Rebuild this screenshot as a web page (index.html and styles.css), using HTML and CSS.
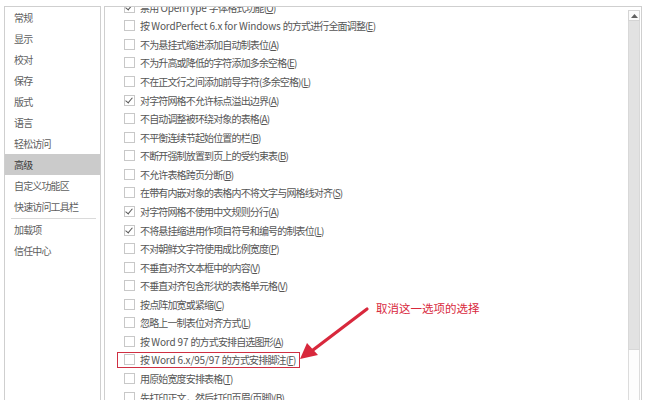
FILE: index.html
```html
<!DOCTYPE html>
<html lang="zh-CN">
<head>
<meta charset="utf-8">
<link rel="stylesheet" href="styles.css">
</head>
<body>
<div class="dialog">
  <nav class="sidebar">
    <div class="nav-item">常规</div>
    <div class="nav-item">显示</div>
    <div class="nav-item">校对</div>
    <div class="nav-item">保存</div>
    <div class="nav-item">版式</div>
    <div class="nav-item">语言</div>
    <div class="nav-item">轻松访问</div>
    <div class="nav-item selected">高级</div>
    <div class="nav-item">自定义功能区</div>
    <div class="nav-item">快速访问工具栏</div>
    <div class="nav-sep"></div>
    <div class="nav-item">加载项</div>
    <div class="nav-item">信任中心</div>
  </nav>
  <section class="content">
    <div class="list">
      <div class="row"><span class="cb checked"></span><span>禁用<span class="lat"> OpenType </span>字体格式功能(<u>O</u>)</span></div>
      <div class="row"><span class="cb"></span><span>按<span class="lat"> WordPerfect 6.x for Windows </span>的方式进行全面调整(<u>E</u>)</span></div>
      <div class="row"><span class="cb"></span><span>不为悬挂式缩进添加自动制表位(<u>A</u>)</span></div>
      <div class="row"><span class="cb"></span><span>不为升高或降低的字符添加多余空格(<u>E</u>)</span></div>
      <div class="row"><span class="cb"></span><span>不在正文行之间添加前导字符(多余空格)(<u>L</u>)</span></div>
      <div class="row"><span class="cb checked"></span><span>对字符网格不允许标点溢出边界(<u>A</u>)</span></div>
      <div class="row"><span class="cb"></span><span>不自动调整被环绕对象的表格(<u>A</u>)</span></div>
      <div class="row"><span class="cb"></span><span>不平衡连续节起始位置的栏(<u>B</u>)</span></div>
      <div class="row"><span class="cb"></span><span>不断开强制放置到页上的受约束表(<u>B</u>)</span></div>
      <div class="row"><span class="cb"></span><span>不允许表格跨页分断(<u>B</u>)</span></div>
      <div class="row"><span class="cb"></span><span>在带有内嵌对象的表格内不将文字与网格线对齐(<u>S</u>)</span></div>
      <div class="row"><span class="cb checked"></span><span>对字符网格不使用中文规则分行(<u>A</u>)</span></div>
      <div class="row"><span class="cb checked"></span><span>不将悬挂缩进用作项目符号和编号的制表位(<u>L</u>)</span></div>
      <div class="row"><span class="cb"></span><span>不对朝鲜文字符使用成比例宽度(<u>P</u>)</span></div>
      <div class="row"><span class="cb"></span><span>不垂直对齐文本框中的内容(<u>V</u>)</span></div>
      <div class="row"><span class="cb"></span><span>不垂直对齐包含形状的表格单元格(<u>V</u>)</span></div>
      <div class="row"><span class="cb"></span><span>按点阵加宽或紧缩(<u>C</u>)</span></div>
      <div class="row"><span class="cb"></span><span>忽略上一制表位对齐方式(<u>L</u>)</span></div>
      <div class="row"><span class="cb"></span><span>按<span class="lat"> Word 97 </span>的方式安排自选图形(<u>A</u>)</span></div>
      <div class="row"><span class="hl"><span class="cb"></span><span>按<span class="lat"> Word 6.x/95/97 </span>的方式安排脚注(<u>F</u>)</span></span></div>
      <div class="row"><span class="cb"></span><span>用原始宽度安排表格(<u>T</u>)</span></div>
      <div class="row"><span class="cb"></span><span>先打印正文，然后打印页眉(页脚)(<u>B</u>)</span></div>
    </div>
    <div class="scrollbar">
      <div class="sb-btn"><svg width="7" height="4" viewBox="0 0 7 4"><path d="M0 4 L3.5 0 L7 4 Z" fill="#606060"/></svg></div>
      <div class="sb-thumb"></div>
      <div class="sb-track"></div>
    </div>
    <svg class="arrow" width="80" height="60" viewBox="0 0 80 60">
      <path d="M72 4 L18 45" stroke="#d8283c" stroke-width="3.2" stroke-linecap="round" fill="none"/>
      <path d="M5 54 L12 38 L23 50 Z" fill="#d8283c"/>
    </svg>
    <div class="note">取消这一选项的选择</div>
  </section>
</div>
</body>
</html>
```

FILE: styles.css
```css
html, body {
  margin: 0;
  padding: 0;
  background: #ffffff;
}
body {
  width: 646px;
  height: 400px;
  overflow: hidden;
  font-family: "Noto Sans CJK SC", "Noto Sans", sans-serif;
  font-size: 10px;
  letter-spacing: -0.85px;
  color: #555;
}
.dialog {
  display: flex;
  gap: 3px;
  padding: 6px 0 0 4px;
  height: 420px;
  box-sizing: border-box;
}
.sidebar {
  width: 97px;
  box-sizing: border-box;
  border: 1px solid #cfcfcf;
  border-bottom: none;
  display: flex;
  flex-direction: column;
}
.nav-item {
  height: 21px;
  line-height: 21px;
  padding-left: 9px;
  color: #5e5e5e;
  white-space: nowrap;
}
.nav-item.selected {
  background: #cbcbcb;
  color: #3a3a3a;
}
.nav-sep {
  height: 1px;
  background: #dadada;
  margin: 1px 4px 0 6px;
}
.content {
  position: relative;
  width: 538px;
  box-sizing: border-box;
  border: 1px solid #cfcfcf;
  border-bottom: none;
  display: flex;
  overflow: hidden;
}
.list {
  flex: 1;
  margin-top: -9px;
  padding-left: 19px;
}
.row {
  height: 18.57px;
  display: flex;
  align-items: center;
  gap: 5px;
  white-space: nowrap;
  color: #555;
}
.lat {
  letter-spacing: -0.15px;
}
.row u {
  text-decoration-thickness: 1px;
  text-underline-offset: 1px;
}
.cb {
  width: 9px;
  height: 9px;
  border: 1px solid #c8c8c8;
  background: #fff;
  flex: none;
  position: relative;
}
.cb.checked::after {
  content: "";
  position: absolute;
  left: 2px;
  top: 0px;
  width: 3px;
  height: 6px;
  border: solid #555;
  border-width: 0 1.3px 1.3px 0;
  transform: rotate(40deg);
}
.hl {
  display: flex;
  align-items: center;
  gap: 5px;
  margin-left: -7px;
  padding: 0 4px 0 6px;
  height: 14px;
  border: 1.5px solid #cf2f42;
}
.scrollbar {
  width: 12px;
  margin-right: 1px;
  display: flex;
  flex-direction: column;
  padding-top: 3px;
}
.sb-btn {
  height: 9px;
  border: 1px solid #d4d4d4;
  background: #fafafa;
  display: flex;
  align-items: center;
  justify-content: center;
}
.sb-thumb {
  height: 328px;
  background: #e2e2e2;
  border: 1px solid #d8d8d8;
  border-top: none;
}
.sb-track {
  flex: 1;
  border-left: 1px solid #dcdcdc;
  border-right: 1px solid #dcdcdc;
  background: #fdfdfd;
}
.arrow {
  position: absolute;
  left: 190px;
  top: 298px;
}
.note {
  position: absolute;
  left: 271px;
  top: 293px;
  font-size: 11.5px;
  letter-spacing: 0;
  color: #d8283c;
  white-space: nowrap;
}
```
